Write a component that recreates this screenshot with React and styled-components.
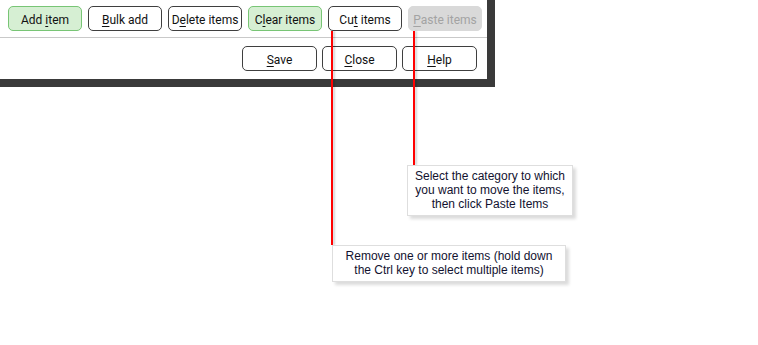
import React from "react";
import styled, { createGlobalStyle } from "styled-components";

const GlobalStyle = createGlobalStyle`
	html, body {
		margin: 0;
		padding: 0;
		background: #ffffff;
	}
	body {
		font-family: Roboto, "Open Sans", sans-serif;
	}
`;

const Page = styled.div`
	position: relative;
	width: 758px;
	height: 345px;
	overflow: hidden;
	background: #ffffff;
`;

const Window = styled.div`
	width: 487px;
	background: #ffffff;
	border-right: 8px solid #3a3a3a;
	border-bottom: 8px solid #3a3a3a;
`;

const TopRow = styled.div`
	display: flex;
	gap: 6px;
	padding: 6px 0 0 8px;
`;

const Separator = styled.div`
	height: 1px;
	margin-top: 6px;
	background: #c9c9c9;
`;

const BottomRow = styled.div`
	display: flex;
	justify-content: flex-end;
	gap: 5px;
	padding: 8px 10px 8px 0;
`;

const Button = styled.button`
	box-sizing: border-box;
	width: ${(p) => p.$w || 74}px;
	height: 25px;
	padding: 2px 0 0;
	font-family: Roboto, "Open Sans", sans-serif;
	font-size: 12px;
	color: ${(p) => (p.$disabled ? "#a3a3a3" : "#111111")};
	background: ${(p) =>
		p.$disabled ? "#d9d9d9" : p.$green ? "#d6efd3" : "#ffffff"};
	border: 1px solid
		${(p) => (p.$disabled ? "#d9d9d9" : p.$green ? "#78c575" : "#3f3f3f")};
	border-radius: 5px;
	cursor: default;
	u {
		text-decoration-thickness: 1px;
		text-underline-offset: 2px;
	}
`;

const Leader = styled.div`
	position: absolute;
	width: 2px;
	background: #ff0000;
	box-shadow: 2px 0 2px rgba(0, 0, 0, 0.18);
`;

const Callout = styled.div`
	position: absolute;
	box-sizing: border-box;
	padding: 3px 6px;
	background: #ffffff;
	border: 1px solid #dedede;
	box-shadow: 3px 3px 3px rgba(0, 0, 0, 0.14);
	font-family: "Liberation Sans", Arial, sans-serif;
	font-size: 12px;
	line-height: 14px;
	color: #121230;
	text-align: center;
`;

export default function App() {
	return (
		<Page>
			<GlobalStyle />
			<Window>
				<TopRow>
					<Button $green>
						Add <u>i</u>tem
					</Button>
					<Button>
						<u>B</u>ulk add
					</Button>
					<Button>
						D<u>e</u>lete items
					</Button>
					<Button $green>
						C<u>l</u>ear items
					</Button>
					<Button>
						Cu<u>t</u> items
					</Button>
					<Button $disabled>
						<u>P</u>aste items
					</Button>
				</TopRow>
				<Separator />
				<BottomRow>
					<Button $w={75}>
						<u>S</u>ave
					</Button>
					<Button $w={75}>
						<u>C</u>lose
					</Button>
					<Button $w={75}>
						<u>H</u>elp
					</Button>
				</BottomRow>
			</Window>

			<Leader style={{ left: 331, top: 31, height: 214 }} />
			<Leader style={{ left: 413, top: 31, height: 134 }} />

			<Callout style={{ left: 407, top: 165, width: 166, height: 51 }}>
				Select the category to which
				<br />
				you want to move the items,
				<br />
				then click Paste Items
			</Callout>
			<Callout style={{ left: 332, top: 245, width: 234, height: 37 }}>
				Remove one or more items (hold down
				<br />
				the Ctrl key to select multiple items)
			</Callout>
		</Page>
	);
}
